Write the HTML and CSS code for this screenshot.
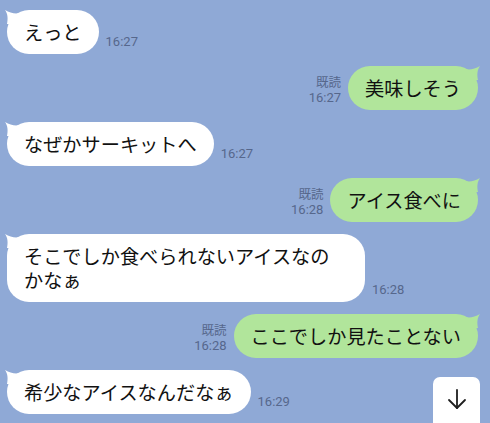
FILE: index.html
```html
<!DOCTYPE html>
<html lang="ja">

<head>
  <meta charset="UTF-8">
  <meta name="viewport" content="width=device-width, initial-scale=1.0">
  <title>トーク</title>
  <link rel="stylesheet" href="styles.css">
</head>

<body>
  <div class="chat">
    <div class="row in">
      <div class="bubble">えっと</div>
      <div class="meta"><span class="time">16:27</span></div>
    </div>
    <div class="row out">
      <div class="meta"><span class="read">既読</span><span class="time">16:27</span></div>
      <div class="bubble">美味しそう</div>
    </div>
    <div class="row in">
      <div class="bubble">なぜかサーキットへ</div>
      <div class="meta"><span class="time">16:27</span></div>
    </div>
    <div class="row out">
      <div class="meta"><span class="read">既読</span><span class="time">16:28</span></div>
      <div class="bubble">アイス食べに</div>
    </div>
    <div class="row in">
      <div class="bubble">そこでしか食べられないアイスなのかなぁ</div>
      <div class="meta"><span class="time">16:28</span></div>
    </div>
    <div class="row out">
      <div class="meta"><span class="read">既読</span><span class="time">16:28</span></div>
      <div class="bubble">ここでしか見たことない</div>
    </div>
    <div class="row in">
      <div class="bubble">希少なアイスなんだなぁ</div>
      <div class="meta"><span class="time">16:29</span></div>
    </div>
  </div>
  <button type="button" class="scroll-down">
    <svg width="22" height="22" viewBox="0 0 22 22" fill="none" stroke="#1e1e1e" stroke-width="1.8" stroke-linecap="round" stroke-linejoin="round">
      <path d="M11 2 V20" />
      <path d="M3 12 L11 20 L19 12" />
    </svg>
  </button>
</body>

</html>
```
FILE: styles.css
```css
* {
  padding: 0;
  margin: 0;
  box-sizing: border-box;
}

html,
body {
  height: 100%;
}

body {
  background-color: #8fa9d6;
  font-family: Roboto, "Noto Sans CJK JP", sans-serif;
  overflow: hidden;
}

.chat {
  display: flex;
  flex-direction: column;
  gap: 12px;
  padding: 10px 12px 0 7px;
}

.row {
  display: flex;
  align-items: flex-end;
  gap: 7px;
}

.row.out {
  justify-content: flex-end;
}

.bubble {
  position: relative;
  max-width: 358px;
  padding: 10px 17px;
  border-radius: 22px;
  background-color: #fff;
  color: #111;
  font-family: "Noto Sans CJK JP", sans-serif;
  font-size: 19.2px;
  line-height: 24px;
}

.bubble::before {
  content: "";
  position: absolute;
  top: 0;
  width: 16px;
  height: 14px;
  background-color: inherit;
}

.in .bubble::before {
  left: -3px;
  clip-path: path("M1 0 C6 3 11 4 16 3 L16 14 L3 14 C4 9 4 4 1 0 Z");
}

.out .bubble {
  background-color: #b1e59b;
}

.out .bubble::before {
  right: -3px;
  clip-path: path("M15 0 C10 3 5 4 0 3 L0 14 L13 14 C12 9 12 4 15 0 Z");
}

.meta {
  display: flex;
  flex-direction: column;
  align-items: flex-end;
  padding-bottom: 4px;
  color: #56678c;
  font-size: 13px;
  line-height: 16px;
}

.read {
  font-family: "Noto Sans CJK JP", sans-serif;
  font-size: 12.5px;
}

.scroll-down {
  position: fixed;
  right: 10px;
  top: 377px;
  width: 47px;
  height: 60px;
  padding-top: 11px;
  display: flex;
  justify-content: center;
  align-items: flex-start;
  border: none;
  border-radius: 7px;
  background-color: #fff;
  cursor: pointer;
}
```
